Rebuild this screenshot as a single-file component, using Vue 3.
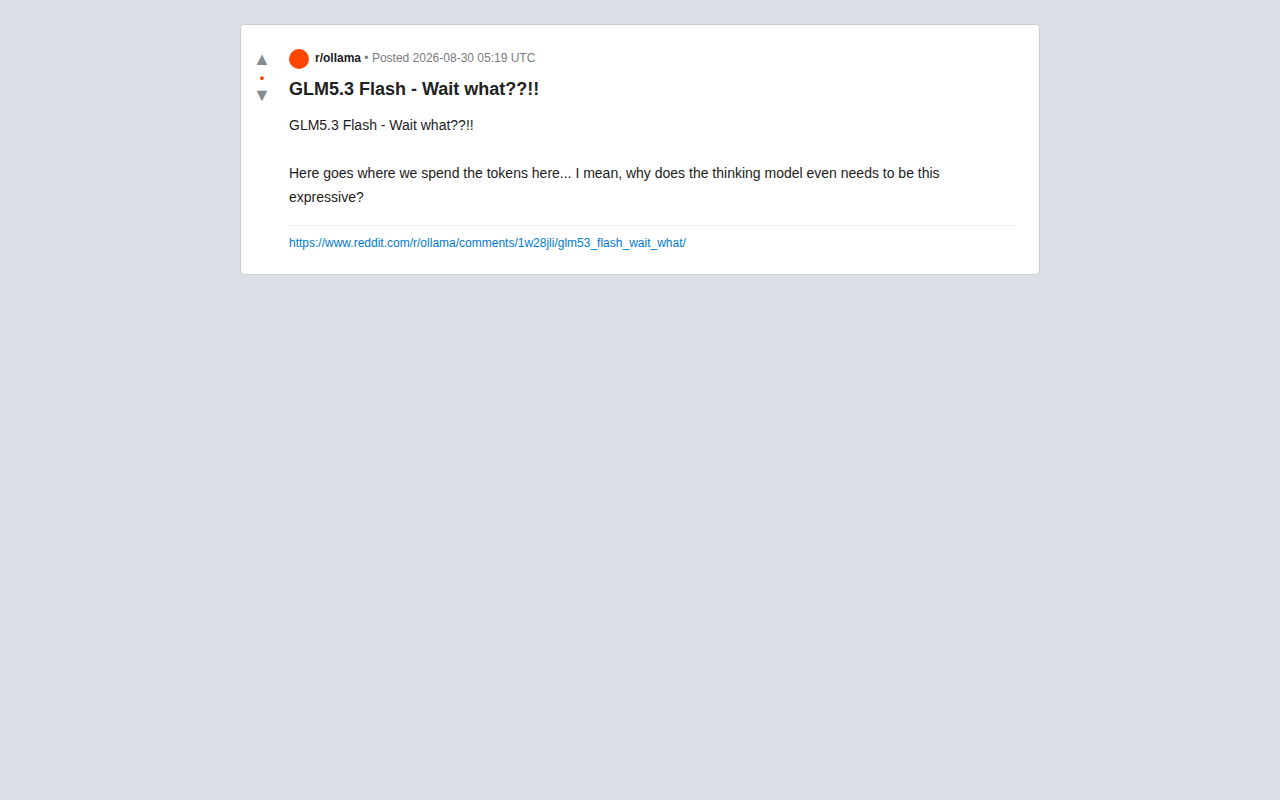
<script setup>
const post = {
  sub: 'r/ollama',
  posted: 'Posted 2026-08-30 05:19 UTC',
  title: 'GLM5.3 Flash - Wait what??!!',
  body: 'GLM5.3 Flash - Wait what??!!\n\nHere goes where we spend the tokens here... I mean, why does the thinking model even needs to be this expressive?',
  url: 'https://www.reddit.com/r/ollama/comments/1w28jli/glm53_flash_wait_what/',
}
</script>

<template>
  <main class="page">
    <article class="card">
      <div class="votes">
        <button class="arrow" type="button" aria-label="Upvote">▲</button>
        <span class="score">•</span>
        <button class="arrow" type="button" aria-label="Downvote">▼</button>
      </div>
      <div class="content">
        <div class="meta">
          <span class="avatar"></span>
          <span><strong class="sub">{{ post.sub }}</strong> • {{ post.posted }}</span>
        </div>
        <h1 class="title">{{ post.title }}</h1>
        <p class="body">{{ post.body }}</p>
        <footer class="foot"><a class="link" :href="post.url">{{ post.url }}</a></footer>
      </div>
    </article>
  </main>
</template>

<style>
body {
  background: #dae0e6;
}
</style>

<style scoped>
.page {
  padding: 24px;
  font-family: "Liberation Sans", Arial, sans-serif;
  color: #1c1c1c;
}
.card {
  box-sizing: border-box;
  max-width: 800px;
  margin: 0 auto;
  padding: 24px 24px 24px 8px;
  display: flex;
  gap: 14px;
  background: #fff;
  border: 1px solid #ccc;
  border-radius: 4px;
}
.votes {
  width: 26px;
  flex: none;
  display: flex;
  flex-direction: column;
  align-items: center;
}
.arrow {
  padding: 0;
  border: 0;
  background: none;
  font: 18px/21px "Liberation Sans", Arial, sans-serif;
  color: #878a8c;
  cursor: pointer;
}
.score {
  font-size: 13px;
  font-weight: bold;
  line-height: 15px;
  color: #ff4500;
}
.content {
  flex: 1;
  min-width: 0;
}
.meta {
  display: flex;
  gap: 6px;
  margin-bottom: 8px;
  font-size: 12px;
  line-height: 18px;
  color: #787c7e;
}
.avatar {
  width: 20px;
  height: 20px;
  border-radius: 50%;
  background: #ff4500;
}
.sub {
  color: #1c1c1c;
}
.title {
  margin: 0 0 12px;
  font-size: 18px;
  line-height: 24px;
  color: #222;
}
.body {
  margin: 0;
  font-size: 14px;
  line-height: 24px;
  white-space: pre-wrap;
}
.foot {
  margin-top: 16px;
  padding-top: 10px;
  border-top: 1px solid #eee;
  font-size: 12px;
  line-height: 14px;
}
.link {
  color: #0079d3;
  text-decoration: none;
  overflow-wrap: anywhere;
}
</style>
